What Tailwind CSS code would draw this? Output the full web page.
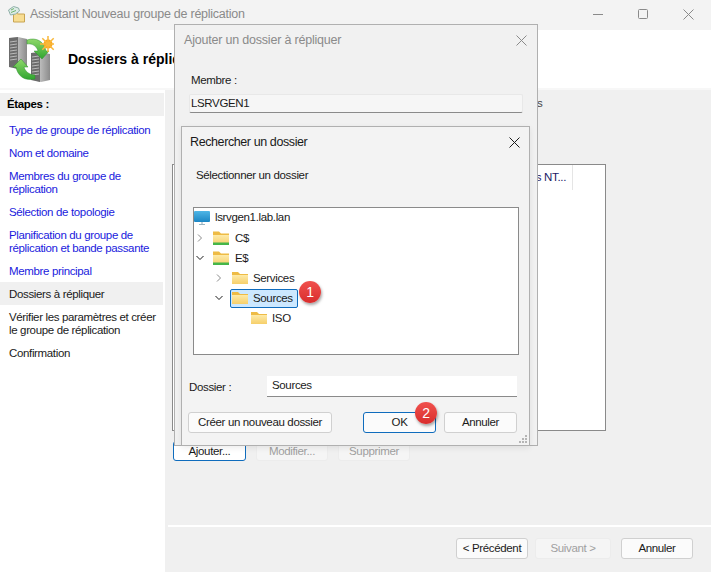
<!DOCTYPE html>
<html lang="fr">
<head>
    <meta charset="UTF-8">
    <title>Assistant Nouveau groupe de réplication</title>
    <script src="https://cdn.jsdelivr.net/npm/@tailwindcss/browser@4"></script>
</head>
<body class="font-['Liberation_Sans',sans-serif] text-[11.5px] tracking-[-0.35px] text-[#1a1a1a]">
<svg width="0" height="0" class="absolute">
    <defs>
        <linearGradient id="folderFront" x1="0" y1="0" x2="0" y2="1">
            <stop offset="0" stop-color="#fdeaa8"/>
            <stop offset="1" stop-color="#f6cf6a"/>
        </linearGradient>
        <linearGradient id="srvSide" x1="0" y1="0" x2="1" y2="0">
            <stop offset="0" stop-color="#e8e8e8"/>
            <stop offset="1" stop-color="#8b8b8b"/>
        </linearGradient>
        <linearGradient id="arrowGreen" x1="0" y1="0" x2="0" y2="1">
            <stop offset="0" stop-color="#8fd86a"/>
            <stop offset="1" stop-color="#2fa52f"/>
        </linearGradient>
        <linearGradient id="screenBlue" x1="0" y1="0" x2="0" y2="1">
            <stop offset="0" stop-color="#4fb6e6"/>
            <stop offset="1" stop-color="#1b86c4"/>
        </linearGradient>
    </defs>
</svg>
<div class="relative w-[711px] h-[572px] overflow-hidden bg-[#f0f0f0] flex flex-col">

    <!-- Barre de titre -->
    <header class="h-[30px] bg-[#f3f3f3] flex items-center pl-[8px] pb-[2px] shrink-0">
        <svg width="17" height="17" viewBox="0 0 17 17" class="mr-[5px]">
            <path d="M5.500 6.500h3l1 1.500h7v8h-11z" fill="#f8dd92" stroke="#c8a452"/>
            <path d="M.5 4l5-3.500 5 1.500 1 3-4 3-5 1z" fill="#dcebe6" stroke="#8fb0a8"/>
            <path d="M3 4l3-1.500M3 6.500l5-2" stroke="#6fb36c"/>
        </svg>
        <span class="text-[12.5px] tracking-[-0.25px] text-[#8a8a8a]">Assistant Nouveau groupe de réplication</span>
        <div class="ml-auto flex items-center gap-[34px] pr-[17px]">
            <svg width="11" height="11" viewBox="0 0 11 11"><path d="M0 5.500h10" stroke="#8a8a8a"/></svg>
            <svg width="11" height="11" viewBox="0 0 11 11"><rect x=".5" y=".5" width="9" height="9" rx="1" fill="none" stroke="#8a8a8a"/></svg>
            <svg width="11" height="11" viewBox="0 0 11 11"><path d="M.5.5l10 10M10.500.5l-10 10" stroke="#8a8a8a"/></svg>
        </div>
    </header>

    <!-- Bandeau -->
    <div class="h-[60px] bg-white flex items-center pl-[8px] shrink-0 border-b-2 border-[#f7f7f7]">
        <svg width="47" height="48" viewBox="0 0 47 48" class="mr-[13px]">
            <!-- serveur haut -->
            <path d="M1 3l9-1 9 2v27l-9 3-9-2z" fill="url(#srvSide)"/>
            <path d="M1 3l9-1v32l-9-2z" fill="#6c6c6c"/>
            <path d="M2 7l7-1M2 10l7-1M2 13l7-1M2 16l7-1M2 19l7-1M2 22l7-1M2 25l7-1" stroke="#b9b9b9"/>
            <!-- serveur bas -->
            <path d="M23 18l9-1 10 2v26l-9 2-9-2z" fill="url(#srvSide)"/>
            <path d="M23 18l9-1v30l-9-2z" fill="#6c6c6c"/>
            <path d="M24 22l7-1M24 25l7-1M24 28l7-1M24 31l7-1M24 34l7-1M24 37l7-1M24 40l7-1" stroke="#b9b9b9"/>
            <!-- fleches -->
            <path d="M19 5c9-3 17 1 19 11h3l-7 8-8-8h4c-1-4-5-8-11-7z" fill="url(#arrowGreen)" stroke="#2f8f2f" stroke-width=".5"/>
            <path d="M27 44c-10 2-17-2-19-12H5l8-8 7 8h-4c1 4 5 8 11 8z" fill="url(#arrowGreen)" stroke="#2f8f2f" stroke-width=".5"/>
            <!-- soleil -->
            <circle cx="40" cy="9" r="4.500" fill="#f9a51f"/>
            <path d="M40 1v16M32 9h14M34.300 3.300l11.400 11.400M45.700 3.300L34.300 14.700" stroke="#f9b83a" stroke-width="1.500"/>
        </svg>
        <h1 class="text-[14px] font-bold tracking-normal text-black">Dossiers à répliquer</h1>
    </div>

    <!-- Corps -->
    <div class="flex flex-1 min-h-0">
        <!-- Etapes -->
        <aside class="w-[165px] bg-white shrink-0 pt-[3px]">
            <div class="h-[23px] bg-[#f0f0f0] flex items-center pl-[7px] mr-[1px]">
                <span class="font-bold text-black">Étapes :</span>
            </div>
            <ul class="pt-[2px] pr-[2px] leading-[13px] text-[#1a1add]">
                <li class="pl-[9px] pt-[6px] pb-[4px]">Type de groupe de réplication</li>
                <li class="pl-[9px] pt-[6px] pb-[4px]">Nom et domaine</li>
                <li class="pl-[9px] pt-[6px] pb-[4px]">Membres du groupe de réplication</li>
                <li class="pl-[9px] pt-[6px] pb-[4px]">Sélection de topologie</li>
                <li class="pl-[9px] pt-[6px] pb-[4px]">Planification du groupe de réplication et bande passante</li>
                <li class="pl-[9px] pt-[6px] pb-[4px]">Membre principal</li>
                <li class="pl-[9px] pt-[6px] pb-[4px] bg-[#f0f0f0] text-[#1a1a1a]">Dossiers à répliquer</li>
                <li class="pl-[9px] pt-[6px] pb-[4px] text-[#1a1a1a]">Vérifier les paramètres et créer le groupe de réplication</li>
                <li class="pl-[9px] pt-[6px] pb-[4px] text-[#1a1a1a]">Confirmation</li>
            </ul>
        </aside>

        <!-- Panneau droit -->
        <main class="flex-1 flex flex-col pl-[7px] min-w-0">
            <div class="flex-1 flex flex-col border-b-2 border-white -ml-[4px] pl-[4px]">
                <p class="pt-[5px] pl-[365px] h-[74px] text-[#444]">s</p>
                <div class="h-[267px] w-[434px] border border-[#8a8a8a] bg-white flex">
                    <div class="h-[25px] w-[400px] border-r border-[#e5e5e5] text-right pr-[6px] pt-[4px] text-[#1a1a66]">s NT...</div>
                </div>
                <div class="flex gap-[10px] mt-[10px] ml-[1px]">
                    <button class="w-[73px] h-[20px] pt-[1px] bg-white border border-[#0f6cbd] rounded-[3px]">Ajouter...</button>
                    <button class="w-[72px] h-[20px] pt-[1px] bg-[#f5f5f5] border border-[#ececec] rounded-[3px] text-[#a0a0a0]">Modifier...</button>
                    <button class="w-[72px] h-[20px] pt-[1px] bg-[#f5f5f5] border border-[#ececec] rounded-[3px] text-[#a0a0a0]">Supprimer</button>
                </div>
            </div>
            <div class="h-[45px] shrink-0 flex items-center justify-end pr-[18px] pb-[2px]">
                <button class="w-[72px] h-[21px] bg-[#fbfbfb] border border-[#d0d0d0] rounded-[3px]">&lt; Précédent</button>
                <button class="ml-[7px] w-[76px] h-[21px] bg-[#f5f5f5] border border-[#ececec] rounded-[3px] text-[#a0a0a0]">Suivant &gt;</button>
                <button class="ml-[10px] w-[72px] h-[21px] bg-[#fbfbfb] border border-[#d0d0d0] rounded-[3px]">Annuler</button>
            </div>
        </main>
    </div>

    <!-- Dialogue : Ajouter un dossier à répliquer -->
    <section class="absolute left-[174px] top-[24px] w-[364px] h-[422px] bg-[#f1f1f1] border border-[#b0b0b0]">
        <div class="flex items-center justify-between h-[30px] pl-[9px] pr-[10px]">
            <span class="text-[12.5px] tracking-[-0.2px] text-[#8a8a8a]">Ajouter un dossier à répliquer</span>
            <svg width="11" height="11" viewBox="0 0 11 11"><path d="M.5.5l10 10M10.500.5l-10 10" stroke="#8a8a8a"/></svg>
        </div>
        <p class="mt-[17px] pl-[16px]">Membre :</p>
        <div class="mt-[5px] ml-[14px] w-[334px] h-[19px] bg-[#f6f6f6] border border-[#e8e8e8] border-b-[#8a8a8a] rounded-[2px] pl-[1px] leading-[16px]">LSRVGEN1</div>
    </section>

    <!-- Dialogue : Rechercher un dossier -->
    <section class="absolute left-[181px] top-[126px] w-[349px] h-[320px] bg-[#f3f3f3] border border-[#b0b0b0] shadow-[0_2px_6px_rgba(0,0,0,0.08)] flex flex-col">
        <div class="flex items-center justify-between h-[30px] pl-[8px] pr-[9px] shrink-0">
            <span class="text-[12.5px] tracking-[-0.4px]">Rechercher un dossier</span>
            <svg width="11" height="11" viewBox="0 0 11 11"><path d="M.5.5l10 10M10.500.5l-10 10" stroke="#1a1a1a"/></svg>
        </div>
        <p class="mt-[10px] pl-[14px]">Sélectionner un dossier</p>

        <!-- Arbre -->
        <div class="mt-[23px] ml-[11px] w-[326px] h-[148px] bg-white border border-[#8a8a8a]">
            <div class="flex items-center h-[18px] mb-[2px]">
                <svg width="17" height="17" viewBox="0 0 17 17" class="mr-[4px]">
                    <rect x="0" y="2" width="16" height="11" rx="1" fill="url(#screenBlue)"/>
                    <path d="M8 13v2M5 15.500h6" stroke="#9bb4c0" stroke-width="1.200"/>
                </svg>
                <span>lsrvgen1.lab.lan</span>
            </div>
            <div class="flex items-center h-[20px]">
                <svg width="8" height="8" viewBox="0 0 8 8" class="ml-[2px] mr-[9px]"><path d="M2 .5L5.500 4 2 7.500" fill="none" stroke="#8a8a8a"/></svg>
                <svg width="16" height="16" viewBox="0 0 16 16" class="mr-[6px]">
                    <path d="M0 1.500h6l2 2h8V15H0z" fill="#eebb45"/>
                    <path d="M0 5h16v10H0z" fill="url(#folderFront)"/>
                    <path d="M0 12.500h16V15H0z" fill="#45b649"/>
                </svg>
                <span>C$</span>
            </div>
            <div class="flex items-center h-[20px]">
                <svg width="8" height="8" viewBox="0 0 8 8" class="ml-[2px] mr-[9px]"><path d="M.5 2L4 5.500 7.500 2" fill="none" stroke="#1a1a1a"/></svg>
                <svg width="16" height="16" viewBox="0 0 16 16" class="mr-[6px]">
                    <path d="M0 1.500h6l2 2h8V15H0z" fill="#eebb45"/>
                    <path d="M0 5h16v10H0z" fill="url(#folderFront)"/>
                    <path d="M0 12.500h16V15H0z" fill="#45b649"/>
                </svg>
                <span>E$</span>
            </div>
            <div class="flex items-center h-[20px] pl-[21px]">
                <svg width="8" height="8" viewBox="0 0 8 8" class="mr-[9px]"><path d="M2 .5L5.500 4 2 7.500" fill="none" stroke="#8a8a8a"/></svg>
                <svg width="16" height="14" viewBox="0 0 16 14" class="mr-[5px]">
                    <path d="M0 1h6l2 2h8v10H0z" fill="#eebb45"/>
                    <path d="M0 4h16v9H0z" fill="url(#folderFront)"/>
                </svg>
                <span>Services</span>
            </div>
            <div class="flex items-center h-[20px] pl-[21px]">
                <svg width="8" height="8" viewBox="0 0 8 8" class="mr-[7px]"><path d="M.5 2L4 5.500 7.500 2" fill="none" stroke="#1a1a1a"/></svg>
                <div class="flex items-center h-[19px] w-[68px] bg-[#cce8ff] border border-[#0f6cbd] rounded-[2px] pl-[1px]">
                    <svg width="16" height="14" viewBox="0 0 16 14" class="mr-[5px]">
                        <path d="M0 1h6l2 2h8v10H0z" fill="#eebb45"/>
                        <path d="M0 4h16v9H0z" fill="url(#folderFront)"/>
                    </svg>
                    <span>Sources</span>
                </div>
            </div>
            <div class="flex items-center h-[20px] pl-[57px]">
                <svg width="16" height="14" viewBox="0 0 16 14" class="mr-[5px]">
                    <path d="M0 1h6l2 2h8v10H0z" fill="#eebb45"/>
                    <path d="M0 4h16v9H0z" fill="url(#folderFront)"/>
                </svg>
                <span>ISO</span>
            </div>
        </div>

        <div class="flex items-center mt-[21px] ml-[7px]">
            <label class="w-[78px] pt-[2px]">Dossier :</label>
            <div class="w-[250px] h-[21px] bg-white border-b border-[#8a8a8a] pl-[5px] leading-[18px]">Sources</div>
        </div>
        <div class="flex items-center mt-[15px] ml-[6px]">
            <button class="w-[144px] h-[21px] bg-[#fbfbfb] border border-[#d0d0d0] rounded-[3px]">Créer un nouveau dossier</button>
            <button class="ml-[31px] w-[73px] h-[21px] bg-[#fbfbfb] border border-[#0f6cbd] rounded-[3px]">OK</button>
            <button class="ml-[8px] w-[73px] h-[21px] bg-[#fbfbfb] border border-[#d0d0d0] rounded-[3px]">Annuler</button>
        </div>
        <!-- Poignée -->
        <svg width="10" height="10" viewBox="0 0 10 10" class="absolute right-[1px] bottom-[1px]" fill="#b5b5b5">
            <rect x="7" y="1" width="2" height="2"/><rect x="4" y="4" width="2" height="2"/><rect x="7" y="4" width="2" height="2"/>
            <rect x="1" y="7" width="2" height="2"/><rect x="4" y="7" width="2" height="2"/><rect x="7" y="7" width="2" height="2"/>
        </svg>
    </section>

    <!-- Pastilles -->
    <div class="absolute left-[299px] top-[281px] w-[22px] h-[22px] rounded-full bg-linear-to-b from-[#f0504d] to-[#d92c2c] text-white text-[14px] flex items-center justify-center shadow-[1px_2px_3px_rgba(0,0,0,0.35)]">1</div>
    <div class="absolute left-[415px] top-[402px] w-[22px] h-[22px] rounded-full bg-linear-to-b from-[#f0504d] to-[#d92c2c] text-white text-[14px] flex items-center justify-center shadow-[1px_2px_3px_rgba(0,0,0,0.35)]">2</div>
</div>
</body>
</html>
